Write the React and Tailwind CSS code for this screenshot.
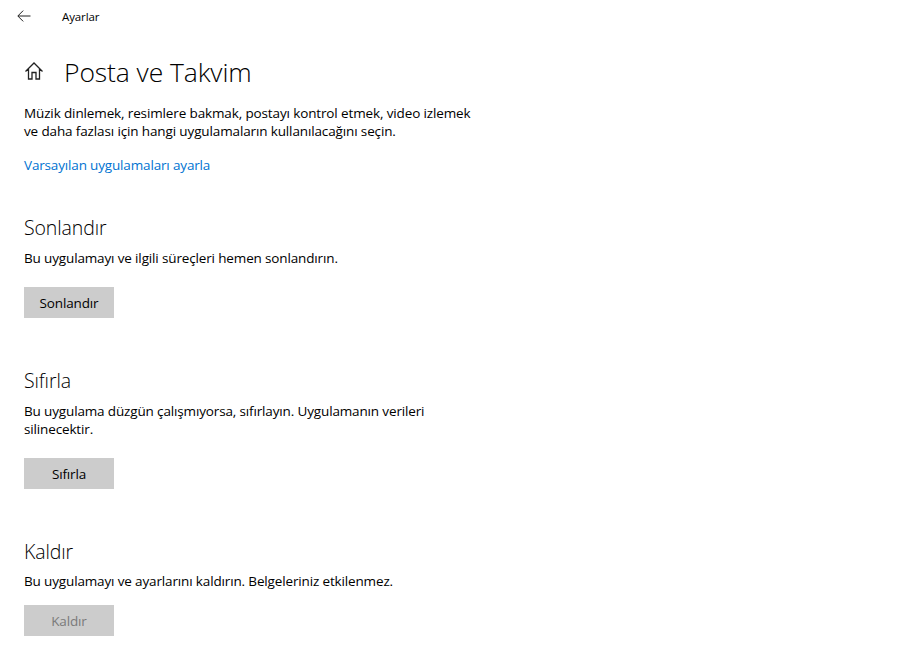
import React from 'react';

const font = { fontFamily: '"Open Sans", "Noto Sans", sans-serif' };

const Section = ({ title, text, button, disabled, className, textGap = 'mt-[8px]' }) => (
  <section className={className}>
    <h2 className="text-[19.5px] leading-[27px] font-light tracking-[-0.1px] text-black">{title}</h2>
    <p className={`${textGap} w-[420px] text-[13.5px] leading-[18px] tracking-[-0.145px] text-black`}>{text}</p>
    <button className={`${disabled ? 'mt-[15px] text-[#7a7a7a]' : 'mt-[20px] text-black'} block h-[31px] w-[90px] bg-[#cccccc] pt-[1px] text-[13.5px] tracking-[-0.145px]`}>
      {button}
    </button>
  </section>
);

export default function App() {
  return (
    <div className="h-[672px] w-[905px] overflow-hidden bg-white" style={font}>
      <header className="flex h-[32px] items-center">
        <div className="flex w-[48px] justify-center">
          <svg width="14" height="12" viewBox="0 0 14 12" fill="none" stroke="#222" strokeWidth="1">
            <path d="M13.5 6H1M6.2.6 .8 6l5.4 5.4" />
          </svg>
        </div>
        <span className="ml-[14px] mt-[1px] text-[11.5px] tracking-[-0.1px] text-black">Ayarlar</span>
      </header>
      <main className="px-6">
        <div className="mt-[20px] flex h-[38px] items-center">
          <svg width="20" height="20" viewBox="0 0 20 20" fill="none" stroke="#222" strokeWidth="1.3">
            <path d="M1.5 10.5 10 2l8.5 8.5M4.5 8v10h3.5v-6.5h4V18h3.5V8" />
          </svg>
          <h1 className="ml-[20px] pt-[2px] text-[26.5px] leading-[38px] font-light tracking-[-0.1px] text-black">Posta ve Takvim</h1>
        </div>
        <p className="mt-[14px] w-[456px] text-[13.5px] leading-[18px] tracking-[-0.13px] text-black">
          Müzik dinlemek, resimlere bakmak, postayı kontrol etmek, video izlemek ve daha fazlası için hangi uygulamaların kullanılacağını seçin.
        </p>
        <a className="mt-[16px] block text-[13.5px] leading-[19px] tracking-[-0.16px] text-[#0073d1]">Varsayılan uygulamaları ayarla</a>
        <Section className="mt-[39px]" title="Sonlandır" text="Bu uygulamayı ve ilgili süreçleri hemen sonlandırın." button="Sonlandır" />
        <Section className="mt-[49px]" title="Sıfırla" text="Bu uygulama düzgün çalışmıyorsa, sıfırlayın. Uygulamanın verileri silinecektir." button="Sıfırla" />
        <Section className="mt-[49px]" textGap="mt-[7px]" title="Kaldır" text="Bu uygulamayı ve ayarlarını kaldırın. Belgeleriniz etkilenmez." button="Kaldır" disabled />
      </main>
    </div>
  );
}
